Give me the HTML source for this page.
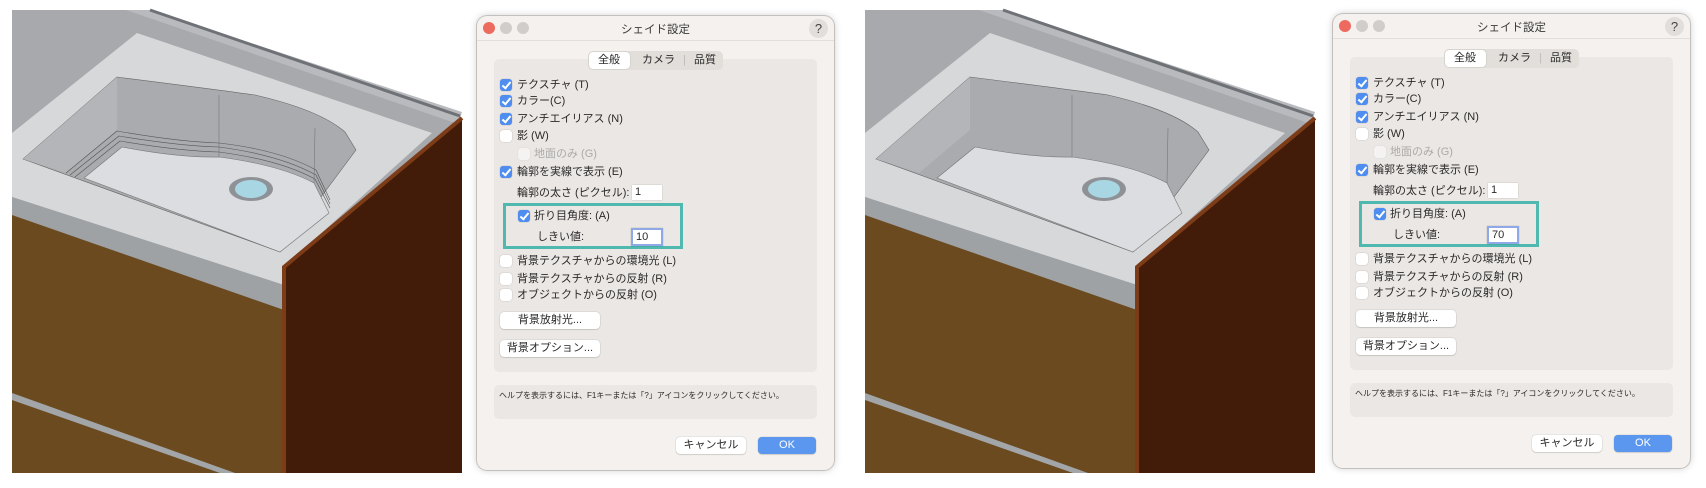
<!DOCTYPE html>
<html><head><meta charset="utf-8"><style>
*{margin:0;padding:0;box-sizing:border-box}
body{width:1706px;height:488px;background:#fff;position:relative;overflow:hidden;font-family:"Liberation Sans","Noto Sans CJK JP",sans-serif;color:#2a2a2a}
.r{position:absolute;top:0;left:0}
.dlg{position:absolute;width:357px;height:454px;background:#f4f1ee;border-radius:10px;box-shadow:0 0 8px rgba(0,0,0,.22),0 0 0 1px #d8d4d1}
.dlg div,.dlg span{position:absolute}
.tl{width:12px;height:12px;border-radius:50%;top:6px;background:#d1cdcb}
.title{top:5px;left:0;width:357px;text-align:center;font-size:11.5px;color:#3a3a3a}
.q{left:332px;top:3px;width:19px;height:19px;border-radius:50%;background:#e2dedb;text-align:center;font-size:13px;line-height:19px;color:#444}
.hl{left:0;top:24px;width:357px;height:1px;background:#e2dedb}
.grp{left:17px;top:43px;width:323px;height:313px;background:#ebe7e4;border-radius:5px}
.tabs{left:111px;top:35px;width:135px;height:19px;background:#e2deda;border-radius:5px;font-size:11px;line-height:19px}
.sel{left:1px;top:1px;width:41px;height:17px;background:#fff;border-radius:4px;box-shadow:0 0 1px rgba(0,0,0,.3)}
.cb{width:12px;height:12px;border-radius:3px;background:#fff;box-shadow:0 0 1px rgba(0,0,0,.35)}
.cb.on{background:#4f8ef0}
.cb.on::after{content:"";position:absolute;left:4px;top:1px;width:3px;height:7px;border:solid #fff;border-width:0 2px 2px 0;transform:rotate(40deg)}
.t{font-size:11px;line-height:14px;white-space:nowrap}
.inp{background:#fff;font-size:11px;line-height:15px;padding-left:3px;box-shadow:0 0 1px rgba(0,0,0,.3)}
.teal{left:26px;top:187px;width:180px;height:46px;border:3px solid #4fb9b0}
.btn{background:#fff;border-radius:4px;box-shadow:0 0 1px rgba(0,0,0,.35),0 1px 1px rgba(0,0,0,.1);font-size:11px;line-height:17px;text-align:center}
.help{left:17px;top:369px;width:323px;height:34px;background:#ebe7e4;border-radius:5px}
</style></head><body>

<svg class="r" width="1706" height="488">
<defs>
<g id="scene">
<rect x="12" y="10" width="450" height="463" fill="#a7a9ac"/>
<polygon points="140,10 462,10 462,118" fill="#fff"/>
<polygon points="126,10 150,10 462,112 458,124" fill="#b8babd"/>
<line x1="150" y1="10" x2="460" y2="116" stroke="#6e7175" stroke-width="3"/>
<polygon points="137,33 432,133 284,267 284,285 12,197 12,133" fill="#d6d8da"/>
<polygon points="12,197 284,285 284,310 12,215" fill="#9fa2a5"/>
<polygon points="12,215 284,310 284,473 12,473" fill="#6b4a20"/>
<polygon points="12,393 235,473 220,473 12,400" fill="#a3a6a9"/>
<polygon points="284,267 462,118 462,473 284,473" fill="#421b09"/>
<polyline points="284,473 284,267 462,118" fill="none" stroke="#7d3c18" stroke-width="4"/>
<path d="M23,159 L117,77 Q220,90 255,95 Q320,110 345,132 L356,150 L280,252 Z" fill="#a9abae" stroke="#666" stroke-width="0.6"/>
<path d="M23,159 L117,77 L117,130 L66,173 Z" fill="#b3b5b8"/>
<path d="M84,178 L122,147 Q180,158 219,157 Q280,165 314,183 L329,213 L280,252 Z" fill="#dcdde0" stroke="#777" stroke-width="0.6"/>
<line x1="219" y1="95" x2="219" y2="157" stroke="#777" stroke-width="0.6"/>
<line x1="315" y1="128" x2="314" y2="183" stroke="#777" stroke-width="0.6"/>
<ellipse cx="251" cy="189" rx="22" ry="12" fill="#8e9296"/>
<ellipse cx="251" cy="189" rx="16" ry="9" fill="#a9d6e3"/>
</g>
</defs>
<use href="#scene"/>
<g transform="translate(853,0)"><use href="#scene"/></g>
<g stroke="#555" stroke-width="0.6" fill="none">
<path d="M66,173 L117,131 Q180,142 219,143 Q280,150 316,170 L330,200"/>
<path d="M70,175 L119,136 Q180,146 219,147 Q280,155 316,175 L330,204"/>
<path d="M75,177 L120,141 Q180,151 219,152 Q280,160 315,179 L330,208"/>
</g>
</svg>

<div class="dlg" style="left:477px;top:16px">
<div class="tl" style="left:6px;background:#ec6a5e"></div><div class="tl" style="left:23px"></div><div class="tl" style="left:40px"></div>
<div class="title">シェイド設定</div><div class="q">?</div><div class="hl"></div>
<div class="grp"></div>
<div class="tabs"><div class="sel"></div><span style="left:10px">全般</span><span style="left:54px">カメラ</span><span style="left:95px;color:#bbb">|</span><span style="left:106px">品質</span></div>
<div class="cb on" style="left:23px;top:63px"></div><span class="t" style="left:40px;top:62px">テクスチャ (T)</span>
<div class="cb on" style="left:23px;top:79px"></div><span class="t" style="left:40px;top:78px">カラー(C)</span>
<div class="cb on" style="left:23px;top:97px"></div><span class="t" style="left:40px;top:96px">アンチエイリアス (N)</span>
<div class="cb" style="left:23px;top:114px"></div><span class="t" style="left:40px;top:113px">影 (W)</span>
<div class="cb" style="left:41px;top:132px;opacity:.5"></div><span class="t" style="left:57px;top:131px;color:#aaa">地面のみ (G)</span>
<div class="cb on" style="left:23px;top:150px"></div><span class="t" style="left:40px;top:149px">輪郭を実線で表示 (E)</span>
<span class="t" style="left:40px;top:170px">輪郭の太さ (ピクセル):</span><div class="inp" style="left:155px;top:169px;width:30px;height:15px">1</div>
<div class="teal"></div>
<div class="cb on" style="left:41px;top:194px"></div><span class="t" style="left:57px;top:193px">折り目角度: (A)</span>
<span class="t" style="left:60px;top:214px">しきい値:</span><div class="inp" style="left:154px;top:212px;width:32px;height:18px;border:2px solid #8fa9e6;line-height:14px">10</div>
<div class="cb" style="left:23px;top:239px"></div><span class="t" style="left:40px;top:238px">背景テクスチャからの環境光 (L)</span>
<div class="cb" style="left:23px;top:257px"></div><span class="t" style="left:40px;top:256px">背景テクスチャからの反射 (R)</span>
<div class="cb" style="left:23px;top:273px"></div><span class="t" style="left:40px;top:272px">オブジェクトからの反射 (O)</span>
<div class="btn" style="left:23px;top:296px;width:100px;height:17px">背景放射光...</div>
<div class="btn" style="left:23px;top:324px;width:100px;height:17px">背景オプション...</div>
<div class="help"><span style="left:5px;top:5px;font-size:8px;white-space:nowrap">ヘルプを表示するには、F1キーまたは「?」アイコンをクリックしてください。</span></div>
<div class="btn" style="left:199px;top:421px;width:70px;height:17px">キャンセル</div>
<div class="btn" style="left:281px;top:421px;width:58px;height:17px;background:#5b97ef;color:#fff">OK</div>
</div>

<div class="dlg" style="left:1333px;top:14px">
<div class="tl" style="left:6px;background:#ec6a5e"></div><div class="tl" style="left:23px"></div><div class="tl" style="left:40px"></div>
<div class="title">シェイド設定</div><div class="q">?</div><div class="hl"></div>
<div class="grp"></div>
<div class="tabs"><div class="sel"></div><span style="left:10px">全般</span><span style="left:54px">カメラ</span><span style="left:95px;color:#bbb">|</span><span style="left:106px">品質</span></div>
<div class="cb on" style="left:23px;top:63px"></div><span class="t" style="left:40px;top:62px">テクスチャ (T)</span>
<div class="cb on" style="left:23px;top:79px"></div><span class="t" style="left:40px;top:78px">カラー(C)</span>
<div class="cb on" style="left:23px;top:97px"></div><span class="t" style="left:40px;top:96px">アンチエイリアス (N)</span>
<div class="cb" style="left:23px;top:114px"></div><span class="t" style="left:40px;top:113px">影 (W)</span>
<div class="cb" style="left:41px;top:132px;opacity:.5"></div><span class="t" style="left:57px;top:131px;color:#aaa">地面のみ (G)</span>
<div class="cb on" style="left:23px;top:150px"></div><span class="t" style="left:40px;top:149px">輪郭を実線で表示 (E)</span>
<span class="t" style="left:40px;top:170px">輪郭の太さ (ピクセル):</span><div class="inp" style="left:155px;top:169px;width:30px;height:15px">1</div>
<div class="teal"></div>
<div class="cb on" style="left:41px;top:194px"></div><span class="t" style="left:57px;top:193px">折り目角度: (A)</span>
<span class="t" style="left:60px;top:214px">しきい値:</span><div class="inp" style="left:154px;top:212px;width:32px;height:18px;border:2px solid #8fa9e6;line-height:14px">70</div>
<div class="cb" style="left:23px;top:239px"></div><span class="t" style="left:40px;top:238px">背景テクスチャからの環境光 (L)</span>
<div class="cb" style="left:23px;top:257px"></div><span class="t" style="left:40px;top:256px">背景テクスチャからの反射 (R)</span>
<div class="cb" style="left:23px;top:273px"></div><span class="t" style="left:40px;top:272px">オブジェクトからの反射 (O)</span>
<div class="btn" style="left:23px;top:296px;width:100px;height:17px">背景放射光...</div>
<div class="btn" style="left:23px;top:324px;width:100px;height:17px">背景オプション...</div>
<div class="help"><span style="left:5px;top:5px;font-size:8px;white-space:nowrap">ヘルプを表示するには、F1キーまたは「?」アイコンをクリックしてください。</span></div>
<div class="btn" style="left:199px;top:421px;width:70px;height:17px">キャンセル</div>
<div class="btn" style="left:281px;top:421px;width:58px;height:17px;background:#5b97ef;color:#fff">OK</div>
</div>
</body></html>
